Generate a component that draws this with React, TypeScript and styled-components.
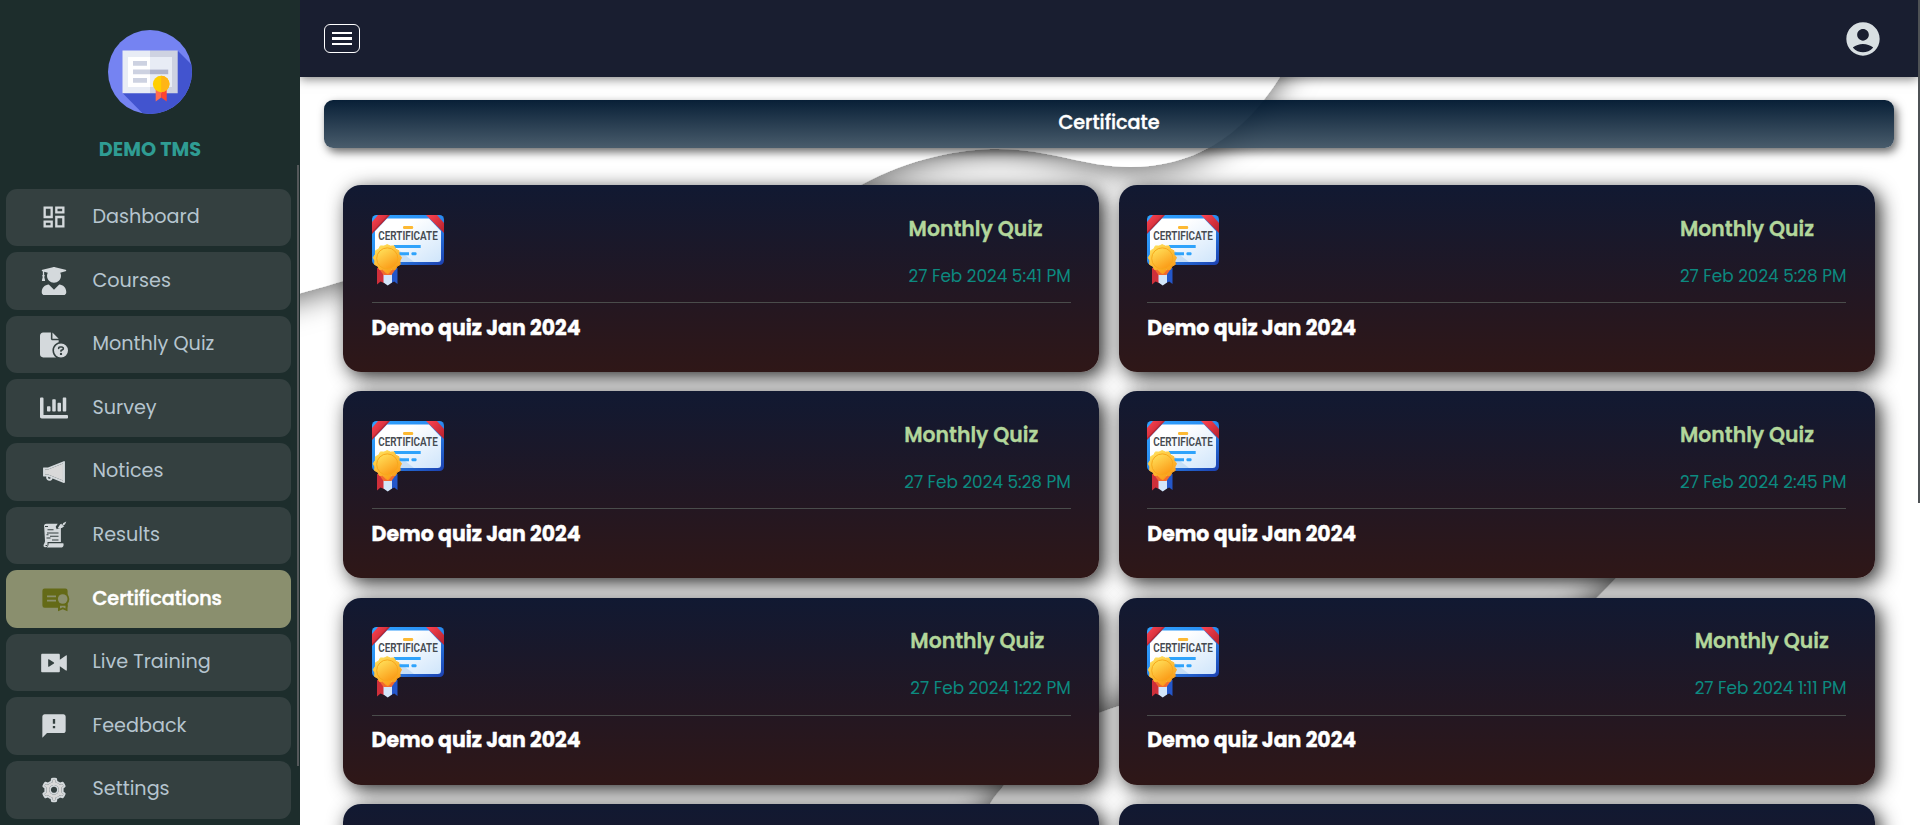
import React from "react";
import styled, { createGlobalStyle } from "styled-components";
import type { IconType } from "react-icons";
import { MdOutlineDashboard, MdFeedback, MdAccountCircle } from "react-icons/md";
import { FaUserGraduate, FaChartBar } from "react-icons/fa";
import { FaFileCircleQuestion } from "react-icons/fa6";
import { AiTwotoneNotification, AiTwotoneSetting } from "react-icons/ai";
import { RiLiveFill } from "react-icons/ri";

const GlobalStyle = createGlobalStyle`
  *, *::before, *::after { box-sizing: border-box; }
  body {
    margin: 0;
    overflow: hidden;
    background: #fff;
    font-family: Poppins, Inter, "Noto Sans", sans-serif;
  }
`;

const Shell = styled.div`
  display: flex;
  width: 100%;
  height: 825px;
  overflow: hidden;
`;

const Sidebar = styled.aside`
  position: relative;
  z-index: 3;
  flex: 0 0 300px;
  display: flex;
  flex-direction: column;
  background: #1d2d2c;
`;

const SidebarScroll = styled.span`
  position: absolute;
  top: 165px;
  right: 1px;
  width: 2px;
  height: 601px;
  background: #54585a;
`;

const Brand = styled.div`
  display: flex;
  flex-direction: column;
  align-items: center;
  height: 188.7px;
  padding-top: 30px;
`;

const BrandName = styled.h1`
  margin: 21.5px 0 0;
  font-size: 19.3px;
  font-weight: 700;
  line-height: 28px;
  color: #2f9c93;
`;

const Nav = styled.nav`
  display: flex;
  flex-direction: column;
  gap: 6px;
  padding: 0 9px 0 6px;
`;

const NavItem = styled.a<{ $active?: boolean }>`
  display: flex;
  align-items: center;
  flex: 0 0 57.6px;
  padding-left: 34px;
  border-radius: 11px;
  background: ${(p) => (p.$active ? "#8a8f6e" : "#344040")};
  color: ${(p) => (p.$active ? "#fff" : "#b6c5cf")};
  font-weight: ${(p) => (p.$active ? 500 : 400)};
  -webkit-text-stroke: ${(p) => (p.$active ? "0.5px #fff" : "0")};
`;

const NavIcon = styled.span<{ $active?: boolean }>`
  display: flex;
  width: 28px;
  margin-right: 24.5px;
  font-size: 28px;
  color: ${(p) => (p.$active ? "#646a17" : "#d4d9dc")};
`;

const NavLabel = styled.span`
  padding-bottom: 1px;
  font-size: 19.2px;
  line-height: 30px;
  white-space: nowrap;
`;

const Main = styled.main`
  position: relative;
  flex: 1;
  min-width: 0;
  display: flex;
  flex-direction: column;
  background: #fff;
`;

const Waves = styled.svg`
  position: absolute;
  inset: 0;
  width: 1620px;
  height: 825px;
`;

const Header = styled.header`
  position: relative;
  z-index: 1;
  flex: 0 0 77px;
  display: flex;
  align-items: center;
  justify-content: space-between;
  margin-right: 2px;
  padding: 0 35.3px 0 24px;
  background: #191e30;
  box-shadow: 0 2px 10px rgba(0, 0, 0, 0.5);
`;

const MenuButton = styled.button`
  display: flex;
  flex-direction: column;
  align-items: center;
  justify-content: center;
  gap: 3px;
  width: 36px;
  height: 29px;
  padding: 0;
  border: 1px solid #fff;
  border-radius: 6px;
  background: none;
`;

const MenuBar = styled.span`
  width: 20px;
  height: 2.6px;
  background: #fff;
`;

const Account = styled.span`
  display: flex;
  font-size: 40px;
  color: #d8dfe2;
`;

const PageScroll = styled.span`
  position: absolute;
  z-index: 2;
  top: 0;
  right: 0;
  width: 2px;
  height: 503px;
  background: #4e5255;
`;

const Content = styled.section`
  position: relative;
  flex: 1;
  min-height: 0;
  padding: 23px 26px 0 24px;
  overflow: hidden;
`;

const Banner = styled.h2`
  display: flex;
  align-items: center;
  justify-content: center;
  height: 48px;
  margin: 0;
  padding-bottom: 3px;
  border-radius: 9px;
  background: linear-gradient(rgba(0, 24, 48, 0.97), rgba(46, 68, 86, 0.87));
  box-shadow: 3px 4px 10px rgba(0, 0, 0, 0.6);
  color: #fff;
  font-size: 19.2px;
  font-weight: 500;
  -webkit-text-stroke: 0.4px #fff;
`;

const Grid = styled.div`
  display: grid;
  grid-template-columns: 1fr 1fr;
  grid-auto-rows: 187px;
  gap: 19.4px;
  padding: 37px 19px 0 19px;
`;

const Card = styled.article`
  display: flex;
  flex-direction: column;
  padding: 28px 28.6px 0;
  border-radius: 18px;
  background: linear-gradient(#111932, #231722 60%, #2f1717);
  box-shadow: 5px 5px 20px rgba(0, 0, 0, 0.85);
`;

const CardTop = styled.div`
  display: flex;
  justify-content: space-between;
  height: 90px;
  border-bottom: 1px solid #4a4c4b;
`;

const Art = styled.svg`
  width: 72px;
  height: 71px;
  margin-top: 1.6px;
  overflow: visible;
`;

const CardMeta = styled.div`
  display: flex;
  flex-direction: column;
  align-items: flex-start;
`;

const CardKind = styled.span`
  margin-top: 0.5px;
  font-size: 20.4px;
  font-weight: 600;
  line-height: 30px;
  color: #b2d69b;
  -webkit-text-stroke: 0.3px #b2d69b;
`;

const CardDate = styled.time`
  margin-top: 17px;
  font-size: 16.85px;
  line-height: 30px;
  font-weight: 400;
  white-space: nowrap;
  color: #0c8a80;
`;

const CardTitle = styled.h3`
  margin: 9.5px 0 0;
  font-size: 20.45px;
  font-weight: 700;
  line-height: 30px;
  color: #fff;
  -webkit-text-stroke: 0.4px #fff;
`;

function BrandLogo() {
  return (
    <svg width="84" height="84" viewBox="108 30 84 84">
      <defs>
        <clipPath id="disc">
          <circle cx="150" cy="72" r="42" />
        </clipPath>
      </defs>
      <g clipPath="url(#disc)">
        <rect x="108" y="30" width="84" height="84" fill="#7583f2" />
        <path d="M178 51l30 30v50h-48L122.500 93z" fill="#4254cf" />
      </g>
      <path d="M122.500 50.500H150V93.200H122.500z" fill="#e8ecf5" />
      <path d="M150 50.500h27.700V93.200H150z" fill="#ced2e1" />
      <path d="M128 57h22v30h-22z" fill="#fff" />
      <path d="M150 57h22v30h-22z" fill="#e8ecf5" />
      <path d="M133 61h14v4.800h-14zM133 69.600h17v4.600h-17zM133 78h14v4.800h-14z" fill="#cdd2e1" />
      <path d="M150 69.600h18.200v4.600H150z" fill="#afb4cc" />
      <path d="M155.700 88h5.500v9.600l-5.500 4z" fill="#ff6a50" />
      <path d="M161.200 88h5.500v13.600l-5.500-4z" fill="#ff4530" />
      <circle cx="161.200" cy="84" r="8.300" fill="#ffcf00" />
      <path d="M161.200 75.700a8.300 8.300 0 010 16.600z" fill="#ffb517" />
    </svg>
  );
}

function ScrollQuill() {
  return (
    <svg width="28" height="28" viewBox="0 0 28 28">
      <path
        d="M6.500 2.800h11.200l-2 3 1 2.500 2.500-.8 1.700-1.500V21H7.500v3.500c0 2.200-4 2.200-4 .2C3.500 23 5 22 5 20L4.200 6.200C3.600 4.200 4.500 2.800 6.500 2.800z"
        fill="currentColor"
      />
      <path d="M8.500 22.300h14.800c.8 1.700 0 4.200-1.500 4.200H6.500c1.600-.8 2.300-2.400 2-4.200z" fill="currentColor" />
      <path d="M17.500 7.400l2.700-4.200 1.500-.4.300 1.700 1.300-2.400 3-1.500-1.200 2.700-2.400 1.600 1.700.3-2.600 1.900z" fill="currentColor" />
      <path
        d="M7.500 8.700h6M7 12h11.500M6.500 13.700h2M10 15.300h8.500M6.500 17h4M12 19h6.500M5.500 24.500h1.500M5 5.500h3"
        stroke="#344040"
        strokeWidth="1.100"
      />
    </svg>
  );
}

function CertificateSeal() {
  return (
    <svg width="28" height="28" viewBox="0 0 28 28" overflow="visible">
      <path
        d="M4.600 3.600h20.800a2.200 2.200 0 012.200 2.200v15.500a1.500 1.500 0 01-1.500 1.500H4.600a2.200 2.200 0 01-2.200-2.200V5.800a2.200 2.200 0 012.200-2.200z"
        fill="currentColor"
      />
      <path d="M7 11.300h9M7 15.700h9" stroke="#8a8f6e" strokeWidth="1.700" />
      <circle cx="22.700" cy="14" r="6.600" fill="currentColor" />
      <circle cx="22.700" cy="14" r="4.800" fill="#8a8f6e" />
      <path d="M18 19.500h9.500v6.800l-4.700-2-4.800 2z" fill="currentColor" />
      <path d="M20 20.800h5.500v2.600l-2.700-1.200-2.800 1.200z" fill="#8a8f6e" />
    </svg>
  );
}

function CertificateArt() {
  return (
    <Art viewBox="0 0 72 71">
      <defs>
        <linearGradient id="frame" x1="0" y1="0" x2="1" y2="1">
          <stop offset="0" stopColor="#2ea3ff" />
          <stop offset="0.5" stopColor="#2a8bf0" />
          <stop offset="1" stopColor="#1c3fae" />
        </linearGradient>
        <linearGradient id="paper" x1="0" y1="0" x2="1" y2="1">
          <stop offset="0.3" stopColor="#fff" />
          <stop offset="1" stopColor="#cfe5fb" />
        </linearGradient>
        <linearGradient id="sash" x1="0" y1="0" x2="1" y2="1">
          <stop offset="0" stopColor="#ff4552" />
          <stop offset="1" stopColor="#b3202c" />
        </linearGradient>
        <linearGradient id="seal" x1="0.200" y1="0" x2="0.800" y2="1">
          <stop offset="0" stopColor="#ffe05a" />
          <stop offset="1" stopColor="#fb9612" />
        </linearGradient>
        <clipPath id="sheet">
          <rect width="72" height="50" rx="4.500" />
        </clipPath>
      </defs>
      <g clipPath="url(#sheet)">
        <rect width="72" height="50" fill="url(#frame)" />
        <path d="M15 3.500h42L69 16v27.500q0 3.500-3.500 3.500H6.500Q3 47 3 43.500V16z" fill="url(#paper)" />
        <path d="M7 0h11L0 19V8z" fill="#b92733" />
        <path d="M6 0h10L0 17V7z" fill="url(#sash)" />
        <path d="M54 0h11l7 8v10z" fill="url(#sash)" />
      </g>
      <path d="M28 36l14 11H24z" fill="#aacdf0" opacity="0.500" />
      <rect x="31" y="11" width="10.200" height="3" rx="1.200" fill="#fdb933" />
      <text
        x="6.300"
        y="25.300"
        fontFamily="Roboto, sans-serif"
        fontSize="12"
        fontWeight="600"
        textLength="59.500"
        lengthAdjust="spacingAndGlyphs"
        fill="#454a50"
      >
        CERTIFICATE
      </text>
      <path d="M22 30h26.700v3H22zM26 37.200h11v3H26z" fill="#2fa3fb" />
      <rect x="39.500" y="37.200" width="5" height="3" rx="1" fill="#2fa3fb" />
      <path d="M5 53h7v15l-3.400-1.600L5 69.500z" fill="#cf2f3a" />
      <path d="M19 53h6.500v16l-3.300-2.600L19 68z" fill="#2457c9" />
      <path d="M11.500 53H20v14.500L15.700 70.500l-4.200-3z" fill="#d3e6fa" />
      <path d="M8 55h15l-3.500 5h-8z" fill="#f26a2e" />
      <path
        d="M15.200 29.600l3.200 1.500 3.600-.2 1.700 3.200 3.200 1.600.1 3.600 2.500 3.300-1.600 3.300.3 3.600-3.200 1.800-1.600 3.200-3.600.1-3.600 4-2-.8-3.300-3.200-3.500-.1-1.600-3.200-3.200-1.800.3-3.600-1.600-3.300 2.100-3.300.1-3.600 3.200-1.600 1.700-3.200 3.600.2z"
        fill="url(#seal)"
        stroke="url(#seal)"
        strokeWidth="1"
        strokeLinejoin="round"
      />
      <circle cx="15.300" cy="43.500" r="10.600" fill="url(#seal)" stroke="#f7a91c" strokeWidth="1" />
    </Art>
  );
}

function WaveBackdrop() {
  return (
    <Waves viewBox="300 0 1620 825" aria-hidden>
      <defs>
        <filter id="cast" x="-10%" y="-20%" width="120%" height="150%">
          <feDropShadow dx="0" dy="6" stdDeviation="15" floodColor="#000" floodOpacity="0.550" />
        </filter>
        <filter id="castUp" x="-20%" y="-30%" width="140%" height="150%">
          <feDropShadow dx="0" dy="-6" stdDeviation="15" floodColor="#000" floodOpacity="0.550" />
        </filter>
        <clipPath id="lowerBounds">
          <rect x="300" y="400" width="1560" height="425" />
        </clipPath>
      </defs>
      <path
        filter="url(#cast)"
        fill="#fff"
        d="M240 309C300 294 330 285 343 281C560 220 740 250 861 185C910 158 960 149 998 149C1050 149 1085 167 1130 167C1190 167 1240 140 1280 77C1295 52 1305 20 1312 -40H240z"
      />
      <g clipPath="url(#lowerBounds)">
        <path
          filter="url(#castUp)"
          fill="#fff"
          d="M965 870C975 838 982 818 990 804C995 795 999 792 1004 785C1030 742 1070 722 1119 706C1250 670 1430 720 1520 660C1560 634 1590 606 1616 578C1680 510 1760 500 1990 490V900H960z"
        />
      </g>
    </Waves>
  );
}

type NavEntry = { label: string; icon: IconType | (() => React.JSX.Element); active?: boolean };

const navEntries: NavEntry[] = [
  { label: "Dashboard", icon: MdOutlineDashboard },
  { label: "Courses", icon: FaUserGraduate },
  { label: "Monthly Quiz", icon: FaFileCircleQuestion },
  { label: "Survey", icon: FaChartBar },
  { label: "Notices", icon: AiTwotoneNotification },
  { label: "Results", icon: ScrollQuill },
  { label: "Certifications", icon: CertificateSeal, active: true },
  { label: "Live Training", icon: RiLiveFill },
  { label: "Feedback", icon: MdFeedback },
  { label: "Settings", icon: AiTwotoneSetting },
];

const certificateDates = [
  "27 Feb 2024 5:41 PM",
  "27 Feb 2024 5:28 PM",
  "27 Feb 2024 5:28 PM",
  "27 Feb 2024 2:45 PM",
  "27 Feb 2024 1:22 PM",
  "27 Feb 2024 1:11 PM",
];

export default function App() {
  return (
    <>
      <GlobalStyle />
      <Shell>
        <Sidebar>
          <Brand>
            <BrandLogo />
            <BrandName>DEMO TMS</BrandName>
          </Brand>
          <Nav>
            {navEntries.map(({ label, icon: Icon, active }) => (
              <NavItem key={label} $active={active}>
                <NavIcon $active={active}>
                  <Icon />
                </NavIcon>
                <NavLabel>{label}</NavLabel>
              </NavItem>
            ))}
          </Nav>
          <SidebarScroll />
        </Sidebar>
        <Main>
          <WaveBackdrop />
          <Header>
            <MenuButton aria-label="Toggle menu">
              <MenuBar />
              <MenuBar />
              <MenuBar />
            </MenuButton>
            <Account>
              <MdAccountCircle />
            </Account>
          </Header>
          <Content>
            <Banner>Certificate</Banner>
            <Grid>
              {certificateDates.map((date, i) => (
                <Card key={i}>
                  <CardTop>
                    <CertificateArt />
                    <CardMeta>
                      <CardKind>Monthly Quiz</CardKind>
                      <CardDate>{date}</CardDate>
                    </CardMeta>
                  </CardTop>
                  <CardTitle>Demo quiz Jan 2024</CardTitle>
                </Card>
              ))}
              <Card />
              <Card />
            </Grid>
          </Content>
          <PageScroll />
        </Main>
      </Shell>
    </>
  );
}
